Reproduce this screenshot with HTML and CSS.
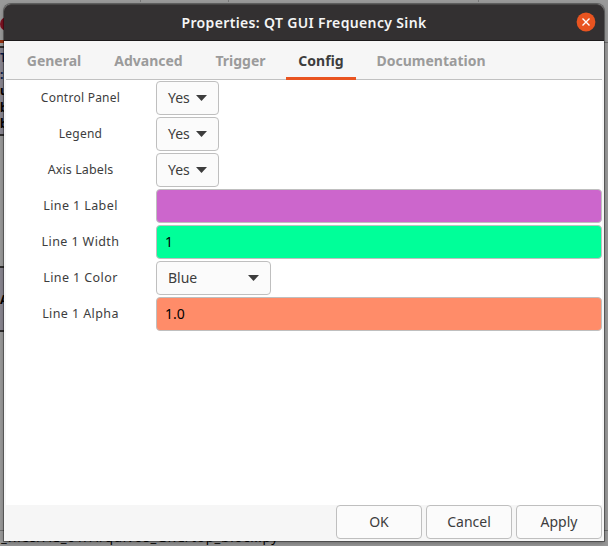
FILE: index.html
```html
<!DOCTYPE html>
<html lang="en">
<head>
<meta charset="utf-8">
<title>Properties: QT GUI Frequency Sink</title>
<link rel="stylesheet" href="styles.css">
</head>
<body>
<div class="desktop">
  <div class="behind">
    <span class="tick tick-a"></span><span class="tick tick-b"></span><span class="tick tick-c"></span>
    <span class="dot"></span><span class="tabline"></span>
    <div class="block block-top"><b class="blue">T</b><b class="blue">:</b><b>u</b><b>b</b><b>b</b></div>
    <div class="block block-low"><b>A</b></div>
    <span class="rule rule-right"></span><span class="rule rule-low"></span>
    <div class="console">_files/AC_01/Arquivos_GRC/top_block.py</div>
  </div>
  <main class="window">
    <header class="titlebar">
      <h1>Properties: QT GUI Frequency Sink</h1>
      <svg class="close" viewBox="0 0 20 20"><circle cx="10" cy="10" r="9.4"/><path d="M6.5 6.5l7 7M13.5 6.5l-7 7"/></svg>
    </header>
    <nav class="tabs">
      <span class="tab general">General</span>
      <span class="tab advanced">Advanced</span>
      <span class="tab trigger">Trigger</span>
      <span class="tab config active">Config</span>
      <span class="tab documentation">Documentation</span>
    </nav>
    <section class="form">
      <label>Control Panel</label><div class="combo">Yes<i class="arrow"></i></div>
      <label>Legend</label><div class="combo">Yes<i class="arrow"></i></div>
      <label class="axis">Axis Labels</label><div class="combo">Yes<i class="arrow"></i></div>
      <label class="spaced">Line 1 Label</label><div class="entry purple"></div>
      <label class="spaced">Line 1 Width</label><div class="entry green">1</div>
      <label class="spaced">Line 1 Color</label><div class="combo wide">Blue<i class="arrow"></i></div>
      <label class="spaced">Line 1 Alpha</label><div class="entry orange">1.0</div>
    </section>
    <footer class="actions">
      <div class="button">OK</div><div class="button">Cancel</div><div class="button">Apply</div>
    </footer>
  </main>
</div>
</body>
</html>
```
FILE: styles.css
```css
* { box-sizing: border-box; }
body { margin: 0; font-family: "Noto Sans", "Open Sans", sans-serif; color: #3d3d3d; }
.desktop { position: relative; width: 608px; height: 546px; padding: 4px; overflow: hidden; background: #999; }
.behind { position: absolute; inset: 0; }
.tick { position: absolute; top: 0; width: 1px; height: 2px; background: #777; }
.tick-a { left: 140px; } .tick-b { left: 228px; } .tick-c { left: 478px; }
.dot { position: absolute; left: 0; top: 17px; width: 14px; height: 14px; border-radius: 50%; background: #7d1020; }
.tabline { position: absolute; left: 0; top: 40px; width: 6px; height: 3px; background: #97300f; }
.block { position: absolute; left: -2px; width: 12px; background: #88858f; border: 2px solid #302e2e; }
.block b { display: block; font-size: 12px; line-height: 16.5px; color: #000; }
.block .blue { color: #001747; }
.block-top { top: 46px; height: 90px; padding-top: 2px; }
.block-low { top: 266px; height: 66px; padding-top: 24px; }
.rule { position: absolute; height: 1px; background: #6d6d6d; }
.rule-right { right: 0; top: 42px; width: 6px; }
.rule-low { left: 0; right: 0; top: 530px; }
.console { position: absolute; left: 1px; top: 529px; font: 13px/17px "Noto Sans", sans-serif; letter-spacing: .9px; color: #000; white-space: nowrap; }
.window { position: relative; display: flex; flex-direction: column; width: 600px; height: 537px; background: #f6f6f6; border-radius: 7px 7px 0 0; box-shadow: 0 0 0 1px rgba(0,0,0,.35), 0 2px 5px rgba(0,0,0,.3); }
.titlebar { height: 37px; flex: none; display: flex; align-items: center; justify-content: center; background: #333031; border-top: 1px solid #484646; border-bottom: 1px solid #1c1a1b; border-radius: 7px 7px 0 0; position: relative; }
h1 { margin: 0; font-size: 14px; line-height: 20px; font-weight: 600; letter-spacing: .35px; color: #f5f5f5; white-space: nowrap; }
.close { position: absolute; right: 8px; top: 7px; width: 20px; height: 20px; }
.close circle { fill: #e95420; }
.close path { stroke: #fff; stroke-width: 1.4; fill: none; }
.tabs { display: flex; flex: none; gap: 8px; height: 39px; margin: 0 2px; padding-left: 8px; border-bottom: 1px solid #c1c1c1; }
.tab { height: 39px; padding-top: 1px; line-height: 38px; text-align: center; font-size: 14px; font-weight: 700; color: #9b9b9b; white-space: nowrap; }
.general { width: 80px; } .advanced { width: 93px; } .trigger { width: 75px; } .config { width: 70px; } .documentation { width: 134px; }
.active { color: #3d3d3d; border-bottom: 3px solid #e95420; }
.form { flex: 1; margin: 0 2px; padding-top: 1px; background: #fff; display: grid; grid-template-columns: 150px 1fr; grid-auto-rows: 34px; row-gap: 2px; align-content: start; }
label { text-align: center; font-size: 12px; line-height: 34px; padding-right: 1px; letter-spacing: .25px; }
.axis { font-size: 12.5px; letter-spacing: .1px; }
.spaced { font-size: 12.5px; letter-spacing: .4px; }
.combo, .entry { height: 34px; border: 1px solid #bfbfbf; border-radius: 4px; font-size: 14px; line-height: 32px; }
.combo { display: flex; align-items: center; justify-content: space-between; width: 63px; padding: 0 12px 0 11px; background: #fbfbfb; }
.wide { width: 115px; }
.arrow { width: 11px; height: 6px; margin-right: -1px; background: #3d3d3d; clip-path: polygon(0 0, 100% 0, 50% 100%); }
.entry { padding-left: 8px; color: #000; }
.purple { background: #cc66cc; } .green { background: #00ff99; } .orange { background: #ff8c69; }
.actions { flex: none; height: 36px; display: flex; justify-content: flex-end; gap: 4px; padding-right: 2px; }
.button { width: 86px; height: 34px; border: 1px solid #bfbfbf; border-radius: 4px; background: #fbfbfb; text-align: center; font-size: 14px; line-height: 32px; }
```
